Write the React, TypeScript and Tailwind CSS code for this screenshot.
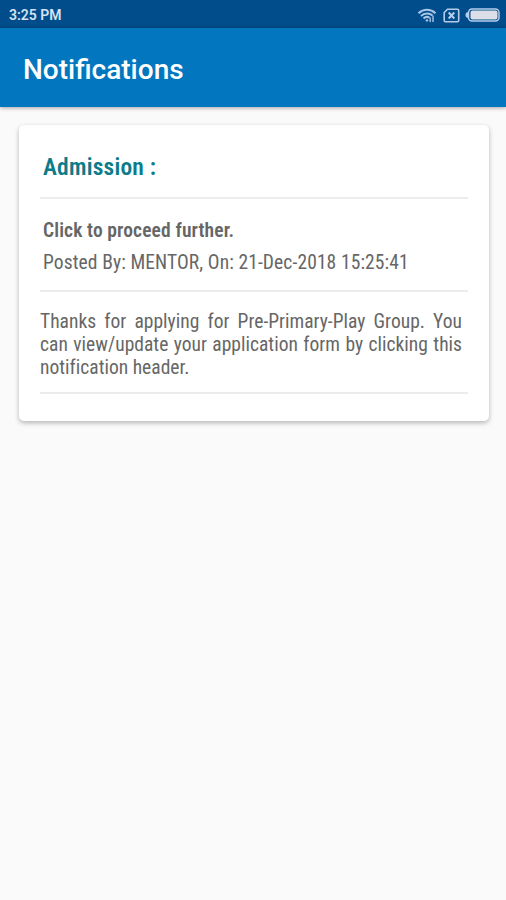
const notification = {
  title: "Admission :",
  action: "Click to proceed further.",
  posted: "Posted By: MENTOR, On: 21-Dec-2018 15:25:41",
  message:
    "Thanks for applying for Pre-Primary-Play Group. You can view/update your application form by clicking this notification header."
};

export default function App() {
  return (
    <div className="flex h-[900px] w-[506px] flex-col overflow-hidden bg-[#fafafa] font-['Roboto',sans-serif]">
      <StatusBar />
      <header className="z-10 flex h-[79px] shrink-0 items-center bg-[#0277bf] pl-[23px] pt-[5px] shadow-[0_1px_4px_rgba(0,0,0,0.35)]">
        <h1 className="text-[28px] font-medium leading-8 text-white">Notifications</h1>
      </header>
      <main className="pl-[18.5px] pr-[17px] pt-[18px]">
        <NotificationCard />
      </main>
    </div>
  );
}

function StatusBar() {
  return (
    <div className="flex h-[28px] shrink-0 items-center justify-between bg-[#014c8a] pl-[9px] pr-[6px] pt-[2px]">
      <span className="text-[14px] font-semibold leading-4 text-[#d5e2f2] [font-stretch:94%]">3:25 PM</span>
      <div className="flex items-center">
        <WifiIcon />
        <NoSimIcon />
        <BatteryIcon />
      </div>
    </div>
  );
}

function NotificationCard() {
  return (
    <article className="h-[296px] rounded-[5px] bg-white pl-[21.5px] pr-[21px] text-[19.5px] text-[#666666] shadow-[0_2px_5px_rgba(0,0,0,0.28)] [font-stretch:75%]">
      <div className="h-[74px] border-b-2 border-[#ececec] pl-[3px] pt-[27px]">
        <h2 className="text-[23.5px] font-semibold leading-[30px] tracking-[0.2px] text-[#0b7c88]">
          {notification.title}
        </h2>
      </div>
      <div className="h-[93px] whitespace-nowrap border-b-2 border-[#ececec] pl-[3px] pt-[18px]">
        <p className="font-semibold leading-[28px] tracking-[0.12px]">{notification.action}</p>
        <p className="mt-[4px] leading-[28px] tracking-[0.11px]">{notification.posted}</p>
      </div>
      <div className="h-[102px] border-b-2 border-[#ececec] pr-[6px] pt-[18px]">
        <p className="text-justify leading-[23px] tracking-[0.02px]">{notification.message}</p>
      </div>
    </article>
  );
}

function WifiIcon() {
  return (
    <svg className="h-[15px] w-[20px]" viewBox="0 0 20 15" fill="none" stroke="#a9c5e6" aria-hidden="true">
      <path d="M1.5 5.2C6.5 .6 13.500 .6 18.500 5.200" strokeWidth="2.200" />
      <path d="M4 8C7.500 4.800 12.500 4.800 15.500 7.500" strokeWidth="2.100" />
      <path d="M6.500 10.500C8.500 8.600 10.800 8.600 12.500 9.800" strokeWidth="2" />
      <path d="M8.300 12.200L10 14L11.500 12.200L10 11Z" fill="#a9c5e6" stroke="none" />
      <path d="M16 7.500V14M13.200 9.500V14" strokeWidth="1.400" />
    </svg>
  );
}

function NoSimIcon() {
  return (
    <svg className="ml-[6px] h-[15px] w-[17px]" viewBox="0 0 17 15" fill="none" stroke="#b5cdec" aria-hidden="true">
      <path d="M4.500 1.200H14.500Q15.700 1.200 15.700 2.400V12.600Q15.700 13.800 14.500 13.800H2.400Q1.200 13.800 1.200 12.600V4.500Z" strokeWidth="1.600" />
      <path d="M5.700 4.500L11.300 10.500M11.300 4.500L5.700 10.500" strokeWidth="2" />
    </svg>
  );
}

function BatteryIcon() {
  return (
    <svg className="ml-[5px] h-[14px] w-[35px]" viewBox="0 0 35 14" aria-hidden="true">
      <rect x="3.500" y="1" width="30.500" height="12" rx="3.500" fill="none" stroke="#b5cdec" strokeWidth="1.500" />
      <rect x="5.500" y="2.500" width="27" height="9" rx="2" fill="#dcdfe7" />
      <path d="M3.500 4Q.5 4 .5 7T3.500 10Z" fill="#b5cdec" />
    </svg>
  );
}
